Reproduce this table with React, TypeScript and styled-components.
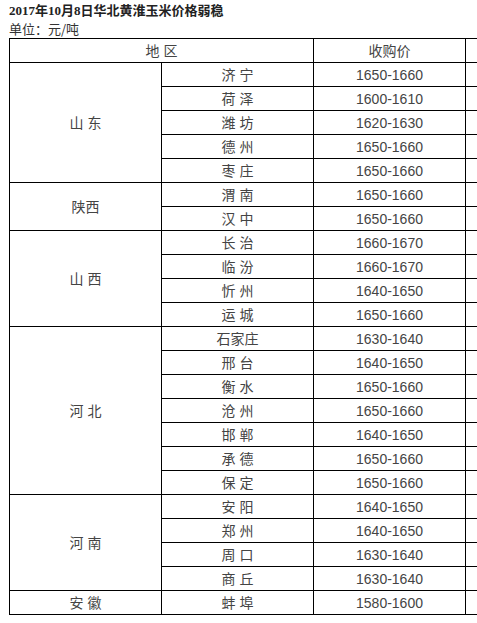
import React from "react";
import styled, { createGlobalStyle } from "styled-components";

const Global = createGlobalStyle`
  html, body { margin: 0; padding: 0; background: #fff; overflow: hidden; }
  body { font-family: "Liberation Sans", "Noto Sans CJK SC", sans-serif; color: #333; }
`;

const Page = styled.div`
  padding: 2px 0 0 9px;
  overflow: hidden;
`;

const Title = styled.div`
  font-family: "Liberation Serif", "Noto Sans CJK SC", serif;
  font-weight: bold;
  font-size: 13px;
  line-height: 18px;
  color: #222;
  white-space: nowrap;
`;

const Unit = styled.div`
  font-family: "Noto Sans CJK SC", sans-serif;
  font-size: 13px;
  line-height: 18px;
  color: #333;
`;

const Table = styled.table`
  border-collapse: collapse;
  table-layout: fixed;
  width: 609px;
`;

const Cell = styled.td`
  border: 1px solid #000;
  height: 23px;
  padding: 0;
  text-align: center;
  vertical-align: middle;
  font-size: 14px;
  line-height: 16px;
  color: #444;
  font-family: "Liberation Sans", "Noto Sans CJK SC", sans-serif;
  white-space: pre;
`;

type City = [string, string];
type Region = { name: string; cities: City[] };

const data: Region[] = [
  {
    name: "山 东",
    cities: [
      ["济 宁", "1650-1660"],
      ["荷 泽", "1600-1610"],
      ["潍 坊", "1620-1630"],
      ["德 州", "1650-1660"],
      ["枣 庄", "1650-1660"],
    ],
  },
  {
    name: "陕西",
    cities: [
      ["渭 南", "1650-1660"],
      ["汉 中", "1650-1660"],
    ],
  },
  {
    name: "山 西",
    cities: [
      ["长 治", "1660-1670"],
      ["临 汾", "1660-1670"],
      ["忻 州", "1640-1650"],
      ["运 城", "1650-1660"],
    ],
  },
  {
    name: "河 北",
    cities: [
      ["石家庄", "1630-1640"],
      ["邢 台", "1640-1650"],
      ["衡 水", "1650-1660"],
      ["沧 州", "1650-1660"],
      ["邯 郸", "1640-1650"],
      ["承 德", "1650-1660"],
      ["保 定", "1650-1660"],
    ],
  },
  {
    name: "河 南",
    cities: [
      ["安 阳", "1640-1650"],
      ["郑 州", "1640-1650"],
      ["周 口", "1630-1640"],
      ["商 丘", "1630-1640"],
    ],
  },
  {
    name: "安 徽",
    cities: [["蚌 埠", "1580-1600"]],
  },
];

export default function App() {
  return (
    <>
      <Global />
      <Page>
        <Title>2017年10月8日华北黄淮玉米价格弱稳</Title>
        <Unit>单位：元/吨</Unit>
        <Table>
          <colgroup>
            <col style={{ width: 152 }} />
            <col style={{ width: 152 }} />
            <col style={{ width: 152 }} />
            <col style={{ width: 152 }} />
          </colgroup>
          <tbody>
            <tr>
              <Cell colSpan={2}>地 区</Cell>
              <Cell>收购价</Cell>
              <Cell />
            </tr>
            {data.map((r) =>
              r.cities.map((c, i) => (
                <tr key={r.name + c[0]}>
                  {i === 0 && <Cell rowSpan={r.cities.length}>{r.name}</Cell>}
                  <Cell>{c[0]}</Cell>
                  <Cell>{c[1]}</Cell>
                  <Cell />
                </tr>
              ))
            )}
          </tbody>
        </Table>
      </Page>
    </>
  );
}
